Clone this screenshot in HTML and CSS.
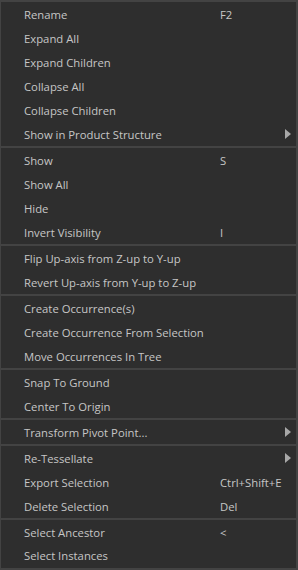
FILE: index.html
```html
<!DOCTYPE html>
<html lang="en">
<head>
  <meta charset="UTF-8">
  <title>Context Menu</title>
  <link rel="stylesheet" href="styles.css">
</head>
<body>
  <div class="menu" role="menu">
    <div class="item"><span class="label">Rename</span><span class="key">F2</span></div>
    <div class="item"><span class="label">Expand All</span></div>
    <div class="item"><span class="label">Expand Children</span></div>
    <div class="item"><span class="label">Collapse All</span></div>
    <div class="item"><span class="label">Collapse Children</span></div>
    <div class="item"><span class="label">Show in Product Structure</span><span class="key"></span><span class="arrow"></span></div>
    <div class="sep"></div>
    <div class="item"><span class="label">Show</span><span class="key">S</span></div>
    <div class="item"><span class="label">Show All</span></div>
    <div class="item"><span class="label">Hide</span></div>
    <div class="item"><span class="label">Invert Visibility</span><span class="key">I</span></div>
    <div class="sep"></div>
    <div class="item"><span class="label">Flip Up-axis from Z-up to Y-up</span></div>
    <div class="item"><span class="label">Revert Up-axis from Y-up to Z-up</span></div>
    <div class="sep"></div>
    <div class="item"><span class="label">Create Occurrence(s)</span></div>
    <div class="item"><span class="label">Create Occurrence From Selection</span></div>
    <div class="item"><span class="label">Move Occurrences In Tree</span></div>
    <div class="sep"></div>
    <div class="item"><span class="label">Snap To Ground</span></div>
    <div class="item"><span class="label">Center To Origin</span></div>
    <div class="sep"></div>
    <div class="item"><span class="label">Transform Pivot Point...</span><span class="key"></span><span class="arrow"></span></div>
    <div class="sep"></div>
    <div class="item"><span class="label">Re-Tessellate</span><span class="key"></span><span class="arrow"></span></div>
    <div class="item"><span class="label">Export Selection</span><span class="key">Ctrl+Shift+E</span></div>
    <div class="item"><span class="label">Delete Selection</span><span class="key">Del</span></div>
    <div class="sep"></div>
    <div class="item"><span class="label">Select Ancestor</span><span class="key">&lt;</span></div>
    <div class="item"><span class="label">Select Instances</span></div>
  </div>
</body>
</html>
```

FILE: styles.css
```css
*, *::before, *::after { box-sizing:border-box; margin:0; padding:0; }
html, body { width:100%; height:100%; overflow:hidden; background:#2e2e2e; }
body { font-family:'Open Sans','Noto Sans',sans-serif; font-size:11.3px; color:#c6c6c6; }

.menu {
  width:298px; height:570px; overflow:hidden;
  background:#2e2e2e;
  border:2px solid #434343; border-left-width:1px;
  display:flex; flex-direction:column;
}
.item {
  height:24px; flex:none;
  display:grid; grid-template-columns:196px 1fr 6px;
  align-items:center;
  padding:0 5px 0 23px;
  white-space:nowrap; cursor:default;
}
.item:hover { background:#3a3a3a; }
.key { color:#c6c6c6; }
.arrow {
  width:0; height:0;
  border-top:5px solid transparent; border-bottom:5px solid transparent;
  border-left:6px solid #a8a8a8;
}
.sep { height:2px; flex:none; background:#434343; }
.menu > .item:last-child { height:22px; }
```
